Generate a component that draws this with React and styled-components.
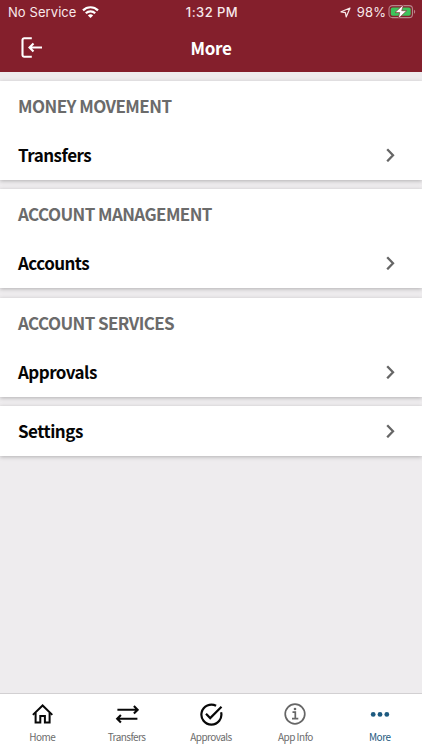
import React from "react";
import styled, { createGlobalStyle } from "styled-components";

const GlobalStyle = createGlobalStyle`
  * { box-sizing: border-box; }
  html, body { margin: 0; padding: 0; }
  body {
    background: #eeecee;
    font-family: "Noto Sans CJK SC", "Noto Sans", sans-serif;
  }
  svg { display: block; flex: none; }
`;

const Screen = styled.div`
  width: 422px;
  height: 750px;
  display: flex;
  flex-direction: column;
  overflow: hidden;
  background: #eeecee;
`;

const Header = styled.header`
  height: 72px;
  flex: none;
  background: #841f2c;
  color: #fff;
`;

const StatusBar = styled.div`
  height: 24px;
  padding: 0 6px 0 8px;
  display: grid;
  grid-template-columns: 1fr auto 1fr;
  align-items: center;
  font: 400 13px/24px Inter, sans-serif;
  color: #f8e9eb;
`;

const StatusGroup = styled.div`
  display: flex;
  align-items: center;
  gap: ${(p) => p.$gap}px;
  justify-content: ${(p) => (p.$end ? "flex-end" : "flex-start")};
`;

const StatusText = styled.span`
  letter-spacing: ${(p) => p.$track || 0}px;
  font-weight: ${(p) => p.$weight || 400};
`;

const BatteryLevel = styled.div`
  display: flex;
  align-items: center;
  gap: 2px;
`;

const TitleBar = styled.div`
  height: 48px;
  padding: 0 20px;
  display: grid;
  grid-template-columns: 24px 1fr 24px;
  align-items: center;
`;

const ExitButton = styled.button`
  width: 24px;
  height: 24px;
  padding: 0;
  border: 0;
  background: none;
  color: #fff;
`;

const Title = styled.h1`
  margin: 0;
  text-align: center;
  font-size: 17px;
  line-height: 47px;
  height: 48px;
  font-weight: 700;
  letter-spacing: -0.3px;
`;

const Content = styled.main`
  flex: 1;
  padding-top: 9px;
  display: flex;
  flex-direction: column;
  gap: 9.3px;
`;

const Card = styled.section`
  background: #fff;
  box-shadow: 0 1px 4px rgba(0, 0, 0, 0.25);
`;

const SectionTitle = styled.h2`
  margin: 0;
  height: 49.1px;
  padding: 0 18px;
  font-size: 17px;
  line-height: 50px;
  font-weight: 700;
  letter-spacing: ${(p) => p.$track}px;
  color: #6b6b6b;
`;

const Row = styled.div`
  height: 50px;
  padding: 0 26px 0 18px;
  display: flex;
  align-items: center;
  justify-content: space-between;
`;

const RowLabel = styled.span`
  font-size: 17px;
  line-height: 50px;
  font-weight: 700;
  letter-spacing: ${(p) => p.$track}px;
  color: #050505;
`;

const TabBar = styled.nav`
  height: 57px;
  flex: none;
  display: grid;
  grid-template-columns: repeat(5, 84.4px);
  background: #fff;
  border-top: 1px solid #d2d0d2;
`;

const Tab = styled.div`
  display: flex;
  flex-direction: column;
  align-items: center;
  padding-top: 8px;
  color: ${(p) => p.$color};
`;

const TabLabel = styled.span`
  margin-top: 3px;
  font-size: 10px;
  line-height: 15px;
  white-space: nowrap;
  letter-spacing: ${(p) => p.$track}px;
  color: ${(p) => (p.$active ? "#1d5a80" : "#6c6c6c")};
`;

const WifiIcon = () => (
  <svg width="17" height="13" viewBox="0 0 17 13" fill="none" stroke="#fff" strokeWidth="2.2">
    <path d="M1 4.4C5.2.2 11.8.2 16 4.4" />
    <path d="M3.8 7.3c2.6-2.6 6.8-2.6 9.4 0" />
    <path d="M8.5 12 5.9 9.4c1.5-1.4 3.7-1.4 5.2 0z" fill="#fff" stroke="none" />
  </svg>
);

const LocationIcon = () => (
  <svg width="11" height="11" viewBox="0 0 11 11" fill="none" stroke="#f8e9eb" strokeWidth="1.2" strokeLinejoin="round">
    <path d="M10 1 6.2 10 5.4 5.6 1 4.8z" />
  </svg>
);

const BatteryIcon = () => (
  <svg width="28" height="16" viewBox="0 0 28 16">
    <rect x="1" y="1.6" width="23.5" height="12" rx="3.4" fill="none" stroke="#b9858b" strokeWidth="1.1" />
    <rect x="2.8" y="3.4" width="19.9" height="8.4" rx="1.8" fill="#3dc35b" />
    <path d="M26 5.7v4c1.6-.6 1.6-3.4 0-4z" fill="#b9858b" />
    <path d="M15.6.5 7 8.6h4.8L10.2 14.7l8.5-8h-5z" fill="#fff" stroke="#841f2c" strokeWidth=".6" />
  </svg>
);

const ExitIcon = () => (
  <svg width="24" height="24" viewBox="0 0 24 24" fill="none" stroke="currentColor" strokeWidth="2.1">
    <path d="M11.8 2.2H4.2A1.7 1.7 0 0 0 2.5 3.9v15.2a1.7 1.7 0 0 0 1.7 1.7h7.6" />
    <path d="M22 11.5H9.7M13.5 7.5l-4 4 4 4" />
  </svg>
);

const Chevron = () => (
  <svg width="10" height="14" viewBox="0 0 10 14" fill="none" stroke="#666" strokeWidth="2.3">
    <path d="m1.2 1.3 5.8 6-5.8 6" />
  </svg>
);

const HomeIcon = () => (
  <svg width="24" height="24" viewBox="0 0 24 24" fill="none" stroke="currentColor" strokeWidth="2">
    <path d="M2.9 12.9 12.6 3.5l9.7 9.4" />
    <path d="M5.6 10.8v9.8h4.7V14h4.6v6.6h4.7v-9.8" />
  </svg>
);

const TransferIcon = () => (
  <svg width="24" height="24" viewBox="0 0 24 24" fill="none" stroke="currentColor" strokeWidth="2.1">
    <path d="M2.4 7.8h20M18.9 4.1l3.7 3.7-3.7 3.7" />
    <path d="M22.4 16.7h-20M5.9 13l-3.7 3.7 3.7 3.7" />
  </svg>
);

const ApproveIcon = () => (
  <svg width="24" height="24" viewBox="0 0 24 24" fill="none" stroke="currentColor" strokeWidth="2.2">
    <path d="M17.1 3.8A10 10 0 1 0 22.1 10.2" />
    <path d="m7 11.8 4.2 4.3L22.5 4.8" />
  </svg>
);

const InfoIcon = () => (
  <svg width="24" height="24" viewBox="0 0 24 24" fill="none" stroke="currentColor" strokeWidth="1.7">
    <circle cx="12" cy="12" r="9.8" />
    <path d="M9.5 10.2h2.8v6.4M9 16.7h6.3" />
    <circle cx="12" cy="7" r="1.3" fill="currentColor" stroke="none" />
  </svg>
);

const MoreIcon = () => (
  <svg width="24" height="24" viewBox="0 0 24 24" fill="currentColor">
    <circle cx="5.2" cy="12.4" r="2.4" />
    <circle cx="12" cy="12.4" r="2.4" />
    <circle cx="18.8" cy="12.4" r="2.4" />
  </svg>
);

const sections = [
  { title: "MONEY MOVEMENT", titleTrack: -0.55, label: "Transfers", track: -0.5 },
  { title: "ACCOUNT MANAGEMENT", titleTrack: -0.59, label: "Accounts", track: -0.55 },
  { title: "ACCOUNT SERVICES", titleTrack: -0.59, label: "Approvals", track: -0.55 },
  { label: "Settings", track: -0.5 },
];

const tabs = [
  { label: "Home", Icon: HomeIcon, color: "#080808", track: -0.5 },
  { label: "Transfers", Icon: TransferIcon, color: "#080808", track: -0.55 },
  { label: "Approvals", Icon: ApproveIcon, color: "#080808", track: -0.55 },
  { label: "App Info", Icon: InfoIcon, color: "#666", track: -0.5 },
  { label: "More", Icon: MoreIcon, color: "#1d5a80", track: -0.45, active: true },
];

export default function App() {
  return (
    <>
      <GlobalStyle />
      <Screen>
        <Header>
          <StatusBar>
            <StatusGroup $gap={5.5}>
              <StatusText $track={0.08}>No Service</StatusText>
              <WifiIcon />
            </StatusGroup>
            <StatusText $weight={500} $track={0.45}>1:32 PM</StatusText>
            <StatusGroup $gap={6} $end>
              <LocationIcon />
              <BatteryLevel>
                <StatusText $track={0.1}>98%</StatusText>
                <BatteryIcon />
              </BatteryLevel>
            </StatusGroup>
          </StatusBar>
          <TitleBar>
            <ExitButton aria-label="Log out"><ExitIcon /></ExitButton>
            <Title>More</Title>
          </TitleBar>
        </Header>
        <Content>
          {sections.map((s) => (
            <Card key={s.label}>
              {s.title && <SectionTitle $track={s.titleTrack}>{s.title}</SectionTitle>}
              <Row>
                <RowLabel $track={s.track}>{s.label}</RowLabel>
                <Chevron />
              </Row>
            </Card>
          ))}
        </Content>
        <TabBar>
          {tabs.map(({ label, Icon, color, track, active }) => (
            <Tab key={label} $color={color}>
              <Icon />
              <TabLabel $track={track} $active={active}>{label}</TabLabel>
            </Tab>
          ))}
        </TabBar>
      </Screen>
    </>
  );
}
